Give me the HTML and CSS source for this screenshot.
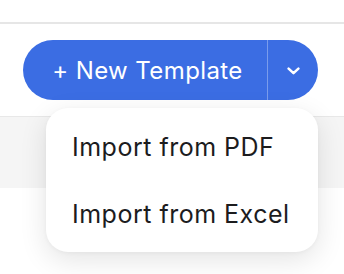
FILE: index.html
```html
<!DOCTYPE html>
<html lang="en">
<head>
    <meta charset="UTF-8">
    <meta name="viewport" content="width=device-width, initial-scale=1.0">
    <title>Templates</title>
    <link rel="stylesheet" href="styles.css">
</head>
<body>
    <div class="topbar"></div>

    <div class="toolbar">
        <div class="split-btn">
            <button class="split-main">+ New Template</button>
            <button class="split-caret" aria-label="More options">
                <svg width="13" height="8" viewBox="0 0 13 8">
                    <path d="M1.6 1.6 L6.5 6.2 L11.4 1.6" fill="none" stroke="#fff" stroke-width="2.5" stroke-linecap="round" stroke-linejoin="round"/>
                </svg>
            </button>

            <div class="menu">
                <a href="#" class="menu-item">Import from PDF</a>
                <a href="#" class="menu-item">Import from Excel</a>
            </div>
        </div>
    </div>

    <div class="band"></div>
</body>
</html>
```

FILE: styles.css
```css
/* General Styles */
html,
body {
    height: 100%;
}

body {
    margin: 0;
    font-family: Inter, "Noto Sans", Arial, sans-serif;
    background: #fff;
}

.topbar {
    height: 22px;
    border-bottom: 2px solid #e6e6e6;
}

/* Toolbar */
.toolbar {
    height: 92px;
    box-sizing: border-box;
    padding: 16px 26px 0 0;
    display: flex;
    justify-content: flex-end;
    align-items: flex-start;
}

.band {
    height: 71px;
    background: #f5f5f5;
    border-top: 1px solid #e8e8e8;
}

/* Split button */
.split-btn {
    position: relative;
    display: flex;
    height: 60px;
    background-color: #3b6de3;
    border-radius: 30px;
}

.split-btn button {
    border: none;
    background: none;
    color: #fff;
    font-family: inherit;
    cursor: pointer;
    padding: 0;
}

.split-main {
    width: 245px;
    padding-left: 5px !important;
    font-size: 24px;
    font-weight: 400;
    letter-spacing: 0.4px;
    border-right: 1.5px solid rgba(255, 255, 255, 0.32) !important;
}

.split-caret {
    width: 50px;
    display: flex;
    justify-content: center;
    align-items: center;
    padding-top: 1px !important;
}

/* Dropdown menu */
.menu {
    position: absolute;
    top: 68px;
    right: 0;
    width: 272px;
    height: 144px;
    box-sizing: border-box;
    padding: 6px 0 4px;
    background: #fff;
    border-radius: 22px;
    box-shadow: 0 8px 28px rgba(0, 0, 0, 0.11), 0 1px 4px rgba(0, 0, 0, 0.04);
    z-index: 2;
}

.menu-item {
    display: block;
    line-height: 67px;
    padding-left: 26px;
    font-size: 25px;
    letter-spacing: 0.5px;
    color: #1c1c1e;
    text-decoration: none;
}
```
